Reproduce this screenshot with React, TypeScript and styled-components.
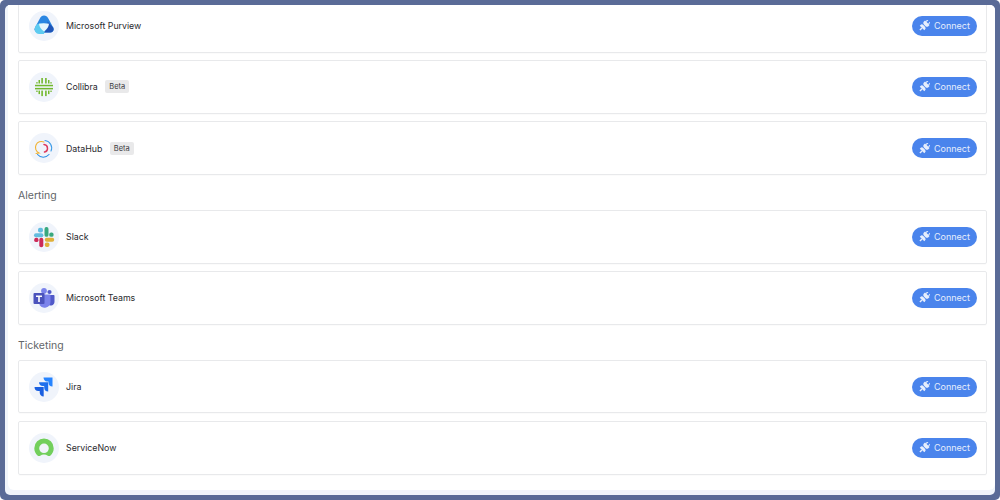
import React from "react";
import styled, { createGlobalStyle } from "styled-components";

const GlobalStyle = createGlobalStyle`
  html, body {
    margin: 0;
    height: 100%;
    overflow: hidden;
    background: #fff;
  }
  * { box-sizing: border-box; }
`;

const PlugIcon = () => (
  <svg width="11" height="11" viewBox="0 0 11 11" fill="currentColor">
    <g transform="rotate(45 5.500 5.500)">
      <rect x="3.300" y="-1" width="1.100" height="2.500" />
      <rect x="6.600" y="-1" width="1.100" height="2.500" />
      <path d="M2.300 1.500h6.400v1.700a2 2 0 0 1-2 2H4.300a2 2 0 0 1-2-2z" />
      <path d="M4.300 6h2.400a2 2 0 0 1 2 2v1H2.300V8a2 2 0 0 1 2-2z" />
      <rect x="4.800" y="9" width="1.400" height="3" />
    </g>
  </svg>
);

const PurviewIcon = () => (
  <svg width="20" height="21" viewBox="0 0 20 21">
    <path d="M10 .5c2 0 3.200 1 4.200 2.800l5 9.200c1.200 2.400-.2 5-3 5H4c-2.800 0-4.300-2.600-3-5l5-9.200C7 1.500 8 .5 10 .5z" fill="#2a86e2" />
    <path d="M13.500 6.500l5.700 6c1.200 2.400-.2 5-3 5H9.500c3-2 5-6 4-11z" fill="#1f55b8" />
    <path d="M1 12.500C1.500 10 4 8.500 6 8.500h4l2 2-2 8.500H5c-3 0-5-3-4-6.500z" fill="#5ccbf0" />
    <path d="M5 8.800c3-.8 7-.8 10 0-.3 3-2 5.500-5 7.700-3-2.200-4.700-4.700-5-7.700z" fill="#e6f6fd" />
  </svg>
);

const CollibraIcon = () => (
  <svg width="20" height="20" viewBox="0 0 20 20" fill="#72b82e">
    <rect x="1" y="7.800" width="18" height="1.500" />
    <rect x="1" y="10.900" width="18" height="1.500" />
    <rect x="7.300" y="1" width="1.600" height="5.500" />
    <rect x="11.100" y="1" width="1.600" height="5.500" />
    <rect x="7.300" y="13.600" width="1.600" height="5.500" />
    <rect x="11.100" y="13.600" width="1.600" height="5.500" />
    <rect x="4.500" y="3" width="1.500" height="3.500" />
    <rect x="14" y="3" width="1.500" height="3.500" />
    <rect x="4.500" y="13.600" width="1.500" height="3.500" />
    <rect x="14" y="13.600" width="1.500" height="3.500" />
    <rect x="2.200" y="5.200" width="1.500" height="1.300" />
    <rect x="16.300" y="5.200" width="1.500" height="1.300" />
    <rect x="2.200" y="13.600" width="1.500" height="1.300" />
    <rect x="16.300" y="13.600" width="1.500" height="1.300" />
  </svg>
);

const DataHubIcon = () => (
  <svg width="20" height="20" viewBox="0 0 20 20" fill="none" strokeWidth="1.100" strokeLinecap="round">
    <path d="M11 2.500a7.500 7.500 0 0 1 6 10.500" stroke="#3a9be8" />
    <path d="M3.500 16.500a7.500 7.500 0 0 0 11.500 0" stroke="#2b8fe6" />
    <path d="M2 15.500 L5 15 A6 6 0 0 1 10 4" stroke="#f0b232" />
    <path d="M10 6.500a3.800 3.800 0 0 1 .5 7.500" stroke="#dc3a5c" strokeWidth="1.500" />
  </svg>
);

const SlackIcon = () => (
  <svg width="22" height="22" viewBox="0 0 22 22">
    <rect x="1" y="7.300" width="9.400" height="3.900" rx="1.900" fill="#63bcdf" />
    <rect x="5" y="1.800" width="5" height="4.700" rx="1.900" fill="#63bcdf" />
    <rect x="11.500" y="1" width="4" height="9.800" rx="1.900" fill="#38a87e" />
    <rect x="16.200" y="6.500" width="4.400" height="4.300" rx="1.900" fill="#38a87e" />
    <rect x="11.800" y="11.800" width="9.400" height="3.900" rx="1.900" fill="#e0b03a" />
    <rect x="11.800" y="16.500" width="4.700" height="4.400" rx="1.900" fill="#e0b03a" />
    <rect x="6.300" y="11.800" width="4" height="9.400" rx="1.900" fill="#cc2a58" />
    <rect x="1.200" y="11.800" width="4.300" height="4.300" rx="1.900" fill="#cc2a58" />
  </svg>
);

const TeamsIcon = () => (
  <svg width="22" height="22" viewBox="0 0 22 22">
    <circle cx="16.500" cy="5" r="2.100" fill="#5059c9" />
    <circle cx="11" cy="3.800" r="2.900" fill="#7b83eb" />
    <path d="M14 8h6.500c.6 0 1 .4 1 1v5.500a4 4 0 0 1-7.500 2z" fill="#5059c9" />
    <path d="M7 7.500h9.500c.6 0 1 .4 1 1V15a6 6 0 0 1-11 3z" fill="#7b83eb" />
    <rect x="0.500" y="6" width="11" height="11" rx="1" fill="#4b53bc" />
    <path d="M3 8.600h6v1.400H6.800v5H5.200v-5H3z" fill="#fff" />
  </svg>
);

const JiraIcon = () => (
  <svg width="22" height="22" viewBox="0 0 22 22">
    <path d="M10.500 1.500h9v9c-2.500 0-4-1.500-4-4V5.400h-1.500c-2 0-3.500-1.500-3.500-3.900z" fill="#2684ff" />
    <path d="M6 6.200h9.200v9.200c-2.500 0-4-1.500-4-4v-1.300H9.800C7.500 10.100 6 8.500 6 6.200z" fill="#1f6fec" />
    <path d="M1.500 11h9.200v9.500c-2.500 0-4-1.700-4-4v-1.400H5.300C3 15.100 1.500 13.500 1.500 11z" fill="#1a5fe0" />
  </svg>
);

const ServiceNowIcon = () => (
  <svg width="20" height="20" viewBox="0 0 20 20">
    <path
      fillRule="evenodd"
      d="M10 .5a9.700 9.700 0 0 1 9.700 9.700c0 3-1.200 5.400-3.200 7.300-.8.700-1.800.8-2.700.2-1.200-.8-2.400-1.200-3.800-1.200s-2.700.4-3.800 1.200c-.9.600-1.900.5-2.700-.2C1.500 15.600.300 13.200.300 10.200A9.700 9.700 0 0 1 10 .5zm0 5a4.800 4.800 0 1 0 0 9.600 4.800 4.800 0 0 0 0-9.600z"
      fill="#72cf5c"
    />
  </svg>
);

type Item = { name: string; icon: React.ReactNode; beta?: boolean };
type Group = { title?: string; items: Item[] };

const groups: Group[] = [
  {
    items: [
      { name: "Microsoft Purview", icon: <PurviewIcon /> },
      { name: "Collibra", icon: <CollibraIcon />, beta: true },
      { name: "DataHub", icon: <DataHubIcon />, beta: true },
    ],
  },
  {
    title: "Alerting",
    items: [
      { name: "Slack", icon: <SlackIcon /> },
      { name: "Microsoft Teams", icon: <TeamsIcon /> },
    ],
  },
  {
    title: "Ticketing",
    items: [
      { name: "Jira", icon: <JiraIcon /> },
      { name: "ServiceNow", icon: <ServiceNowIcon /> },
    ],
  },
];

export default function App() {
  return (
    <>
      <GlobalStyle />
      <Frame>
        <Panel>
          <Content>
            {groups.map((group, i) => (
              <Section key={i}>
                {group.title && <Heading>{group.title}</Heading>}
                {group.items.map((item) => (
                  <Row key={item.name}>
                    <Info>
                      <Badge>{item.icon}</Badge>
                      <Name>{item.name}</Name>
                      {item.beta && <Beta>Beta</Beta>}
                    </Info>
                    <ConnectButton>
                      <PlugIcon />
                      Connect
                    </ConnectButton>
                  </Row>
                ))}
              </Section>
            ))}
          </Content>
        </Panel>
      </Frame>
    </>
  );
}

const Frame = styled.div`
  width: 1000px;
  height: 500px;
  padding: 5px;
  background: #5a6b97;
  border-radius: 5px;
  font-family: Inter, "Liberation Sans", sans-serif;
`;

const Panel = styled.div`
  height: 100%;
  overflow: hidden;
  background: #f1f5fb;
  border-radius: 5px;
  padding: 0 0 5px 3px;
  display: flex;
`;

const Content = styled.div`
  flex: 1;
  background: #fff;
  border-radius: 0 0 6px 6px;
  padding: 0 8px 0 10px;
  overflow: hidden;
`;

const Section = styled.section`
  display: flex;
  flex-direction: column;
  gap: 7.6px;

  &:first-child {
    margin-top: -6px;
  }
`;

const Heading = styled.h3`
  margin: 0 0 -7.6px;
  height: 35px;
  padding-top: 6px;
  display: flex;
  align-items: center;
  font-size: 10.500px;
  font-weight: 400;
  color: #626569;
`;

const Row = styled.div`
  height: 53.600px;
  display: flex;
  align-items: center;
  justify-content: space-between;
  padding: 0 9px 0 10px;
  background: #fff;
  border: 1px solid #e8e9eb;
  border-radius: 2px;
  box-shadow: 0 1px 1px rgba(0, 0, 0, 0.02);
`;

const Info = styled.div`
  display: flex;
  align-items: center;
`;

const Badge = styled.div`
  width: 30px;
  height: 30px;
  border-radius: 50%;
  background: #f0f4fb;
  display: flex;
  align-items: center;
  justify-content: center;
  margin-right: 7px;
`;

const Name = styled.span`
  font-size: 8.800px;
  font-weight: 400;
  color: #2a2a2e;
`;

const Beta = styled.span`
  margin-left: 7.500px;
  padding: 0 4px;
  height: 13px;
  line-height: 13px;
  font-size: 7.500px;
  font-weight: 400;
  color: #3a3a3e;
  background: #e9e9ea;
  border-radius: 2px;
`;

const ConnectButton = styled.button`
  width: 65px;
  height: 20px;
  display: flex;
  align-items: center;
  justify-content: center;
  gap: 4px;
  padding: 0;
  border: 0;
  border-radius: 10px;
  background: #4a84ec;
  color: #e6eefc;
  font-family: inherit;
  font-size: 9px;
  font-weight: 400;
`;
